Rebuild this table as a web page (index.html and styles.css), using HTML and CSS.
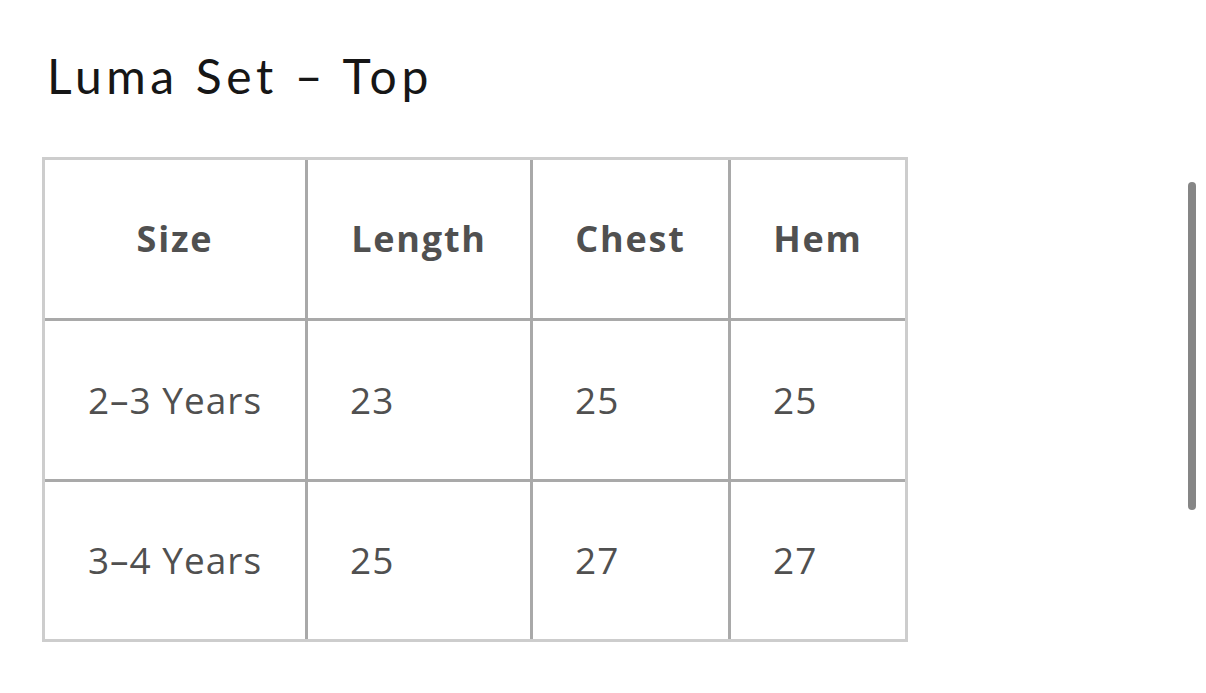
FILE: index.html
```html
<!DOCTYPE html>
<html lang="en">
<head>
<meta charset="utf-8">
<title>Luma Set – Top</title>
<link rel="stylesheet" href="styles.css">
</head>
<body>
<main class="page">
  <h1 class="title">Luma Set – Top</h1>
  <div class="size-table" role="table">
    <div class="cell head" role="columnheader">Size</div>
    <div class="cell head" role="columnheader">Length</div>
    <div class="cell head" role="columnheader">Chest</div>
    <div class="cell head last-col" role="columnheader">Hem</div>

    <div class="cell label" role="cell">2–3 Years</div>
    <div class="cell" role="cell">23</div>
    <div class="cell" role="cell">25</div>
    <div class="cell last-col" role="cell">25</div>

    <div class="cell label last-row" role="cell">3–4 Years</div>
    <div class="cell last-row" role="cell">25</div>
    <div class="cell last-row" role="cell">27</div>
    <div class="cell last-col last-row" role="cell">27</div>
  </div>
</main>
<div class="scrollbar"></div>
</body>
</html>
```
FILE: styles.css
```css
html, body {
  margin: 0;
  padding: 0;
  background: #ffffff;
}

.page {
  padding: 46px 0 0 42px;
}

.title {
  margin: 0 0 0 5px;
  font-family: "Lato", "Noto Sans", sans-serif;
  font-weight: 400;
  font-size: 48px;
  line-height: 60px;
  letter-spacing: 4.6px;
  color: #161616;
}

.size-table {
  margin-top: 51px;
  display: grid;
  grid-template-columns: 263px 225px 198px 174px;
  grid-template-rows: 161px 161px 157px;
  width: 866px;
  box-sizing: border-box;
  border: 3px solid #cdcdcd;
  font-family: "Open Sans", "Noto Sans", sans-serif;
  color: #505050;
}

.cell {
  box-sizing: border-box;
  border-right: 3px solid #a9a9a9;
  border-bottom: 3px solid #a9a9a9;
  display: flex;
  align-items: center;
  padding-left: 42px;
  padding-bottom: 2px;
  font-size: 37px;
  font-weight: 400;
  letter-spacing: 1px;
}

.cell.head {
  justify-content: center;
  padding-left: 0;
  font-weight: 700;
  font-size: 36px;
  letter-spacing: 1.8px;
}

.cell.label {
  justify-content: center;
  padding-left: 0;
}

.cell.last-col {
  border-right: none;
}

.cell.last-row {
  border-bottom: none;
}

.scrollbar {
  position: fixed;
  left: 1188px;
  top: 182px;
  width: 8px;
  height: 328px;
  border-radius: 4px;
  background: #868686;
}
```
